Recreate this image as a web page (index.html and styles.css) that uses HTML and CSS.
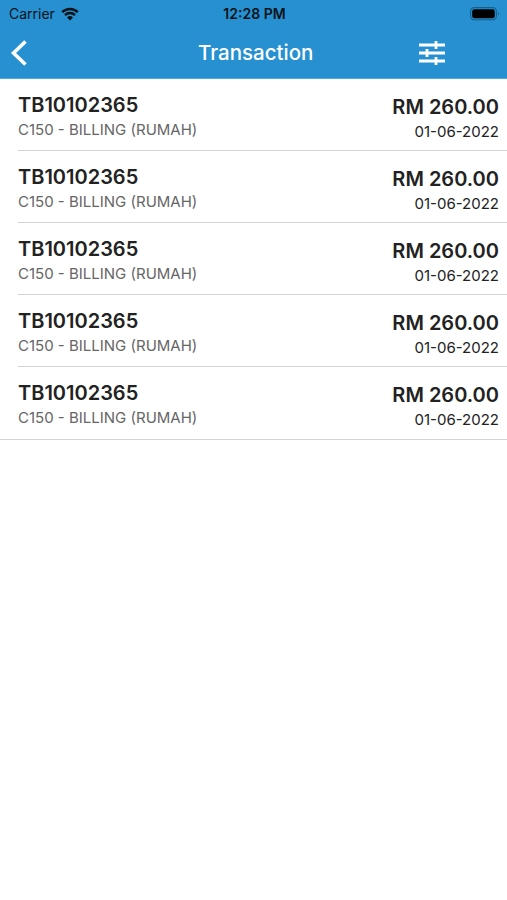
FILE: index.html
```html
<!DOCTYPE html>
<html lang="en">
<head>
<meta charset="utf-8">
<title>Transaction</title>
<link rel="stylesheet" href="styles.css">
</head>
<body>
<header class="header">
  <div class="status">
    <div class="carrier"><span class="carrier-name">Carrier</span>
      <svg class="wifi" width="18" height="14" viewBox="0 0 18 14"><path d="M1.2 5.2a11.2 11.2 0 0 1 15.6 0M4 8.1a7.2 7.2 0 0 1 10 0" fill="none" stroke="#0b1318" stroke-width="2.5"/><path d="M9 13.4 6 10.4a4.3 4.3 0 0 1 6 0z" fill="#0b1318"/></svg>
    </div>
    <div class="time">12:28 PM</div>
    <svg class="battery" width="30" height="14" viewBox="0 0 30 14"><rect x=".6" y=".6" width="25.8" height="12.2" rx="3.6" fill="none" stroke="#176089" stroke-width="1.1"/><rect x="2.2" y="2.2" width="22.6" height="9" rx="2.2" fill="#000"/><path d="M28 4.6q1.8 2.1 0 4.2z" fill="#176089"/></svg>
  </div>
  <nav class="nav">
    <svg class="back" width="18" height="28" viewBox="0 0 18 28"><path d="M15.5 2.5 3.5 14l12 11.5" fill="none" stroke="#fff" stroke-width="3.6"/></svg>
    <h1 class="title">Transaction</h1>
    <svg class="filter" width="26" height="24" viewBox="0 0 26 24"><path d="M0 4h26M0 12h26M0 20h26M17 0v8M8 8v8M17 16v8" fill="none" stroke="#fff" stroke-width="2.8"/></svg>
  </nav>
</header>
<main class="list">
  <article class="row"><div><div class="code">TB10102365</div><div class="desc">C150 - BILLING (RUMAH)</div></div><div class="right"><div class="amount">RM 260.00</div><div class="date">01-06-2022</div></div></article>
  <article class="row"><div><div class="code">TB10102365</div><div class="desc">C150 - BILLING (RUMAH)</div></div><div class="right"><div class="amount">RM 260.00</div><div class="date">01-06-2022</div></div></article>
  <article class="row"><div><div class="code">TB10102365</div><div class="desc">C150 - BILLING (RUMAH)</div></div><div class="right"><div class="amount">RM 260.00</div><div class="date">01-06-2022</div></div></article>
  <article class="row"><div><div class="code">TB10102365</div><div class="desc">C150 - BILLING (RUMAH)</div></div><div class="right"><div class="amount">RM 260.00</div><div class="date">01-06-2022</div></div></article>
  <article class="row"><div><div class="code">TB10102365</div><div class="desc">C150 - BILLING (RUMAH)</div></div><div class="right"><div class="amount">RM 260.00</div><div class="date">01-06-2022</div></div></article>
</main>
</body>
</html>
```
FILE: styles.css
```css
* { box-sizing: border-box; }
body { margin: 0; background: #fff; color: #222; font-family: Inter, "Liberation Sans", sans-serif; }
svg { display: block; }
.header { height: 79px; background: #2690d0; border-bottom: 1px solid #52a6d9; }
.status { height: 27px; padding: 0 7px 0 9px; display: grid; grid-template-columns: 1fr auto 1fr; align-items: center; color: #0b1318; }
.carrier { display: flex; align-items: center; gap: 6px; font-size: 14px; }
.time { font-size: 14px; font-weight: 600; }
.battery { justify-self: end; }
.nav { height: 51px; padding: 0 62px 0 10px; display: grid; grid-template-columns: 188px 1fr auto; align-items: center; }
.title { margin: 0; color: #fff; font-size: 20.5px; font-weight: 500; line-height: 28px; }
.list { border-bottom: 1px solid #d4d4d4; height: 361px; }
.row { height: 72px; margin-left: 18px; padding: 14px 8px 0 0; display: flex; justify-content: space-between; border-bottom: 1px solid #d4d4d4; }
.row:last-child { border-bottom: 0; }
.code { font-size: 20px; font-weight: 600; line-height: 24px; }
.desc { margin-top: 4px; color: #666; font-size: 15px; line-height: 18px; }
.right { padding-top: 2px; text-align: right; }
.amount { font-size: 20px; font-weight: 600; line-height: 24px; }
.date { margin-top: 4px; font-size: 15px; line-height: 18px; }
```
